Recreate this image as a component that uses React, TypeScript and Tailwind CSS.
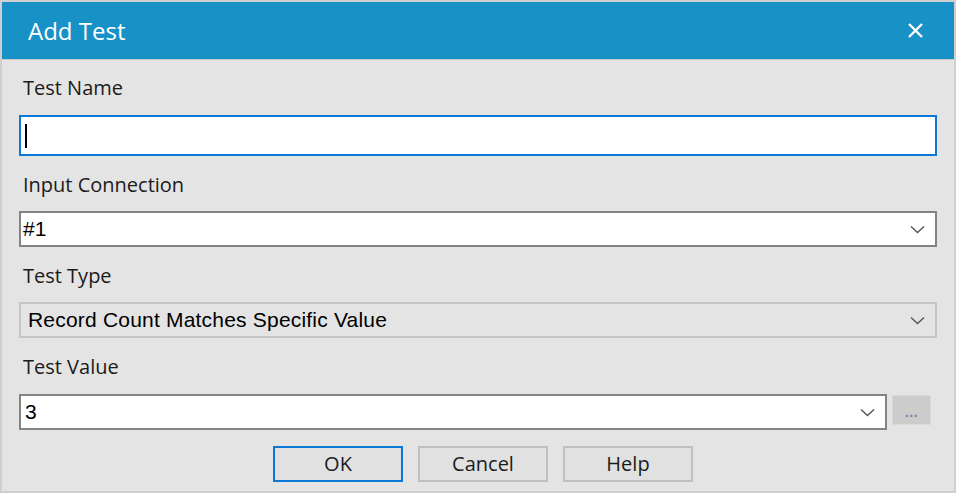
import React from "react"

const uiFont = { fontFamily: '"Open Sans", "Noto Sans", sans-serif' }
const fieldFont = { fontFamily: '"Liberation Sans", Arial, sans-serif' }

function Chevron() {
  return (
    <svg width="15" height="9" viewBox="0 0 15 9" className="shrink-0">
      <path d="M1 1.5 L7.5 7.5 L14 1.5" fill="none" stroke="#555" strokeWidth="1.4" />
    </svg>
  )
}

function Label({ children }: { children: React.ReactNode }) {
  return (
    <div className="ml-[21px] h-6 leading-6 text-[20px] text-[#1b1b1b]" style={uiFont}>
      {children}
    </div>
  )
}

export default function App() {
  return (
    <div className="w-[960px] h-[496px] bg-white">
      <div className="w-[956px] h-[493px] border-2 border-[#cfcfcf] bg-[#e4e4e4] flex flex-col">
        {/* title bar */}
        <div className="h-[58px] bg-[#1791c6] border-b border-[#c9c9c9] flex items-center justify-between pl-[26px] pr-[30px] shrink-0">
          <span className="text-white text-[24px]" style={uiFont}>Add Test</span>
          <svg width="17" height="17" viewBox="0 0 17 17">
            <path d="M2 2 L15 15 M15 2 L2 15" stroke="white" strokeWidth="2.4" />
          </svg>
        </div>

        <div className="flex flex-col">
          <div className="mt-[16px]">
            <Label>Test Name</Label>
          </div>
          <div className="mt-[15px] mx-[17px] h-[41px] border-2 border-[#0a78d4] bg-white flex items-center px-[4px]">
            <div className="w-[2px] h-[24px] bg-black" />
          </div>

          <div className="mt-[17px]">
            <Label>Input Connection</Label>
          </div>
          <div className="mt-[14px] mx-[17px] h-[36px] border-2 border-[#848484] bg-white flex items-center justify-between pl-[2px] pr-[10px]">
            <span className="text-[21px] text-black" style={fieldFont}>#1</span>
            <Chevron />
          </div>

          <div className="mt-[17px]">
            <Label>Test Type</Label>
          </div>
          <div className="mt-[14px] mx-[17px] h-[36px] border-2 border-[#c4c4c4] bg-[#e4e4e4] flex items-center justify-between pl-[7px] pr-[10px]">
            <span className="text-[21px] tracking-[0.2px] text-black" style={fieldFont}>Record Count Matches Specific Value</span>
            <Chevron />
          </div>

          <div className="mt-[17px]">
            <Label>Test Value</Label>
          </div>
          <div className="mt-[15px] ml-[17px] mr-[23px] flex items-start gap-[5px]">
            <div className="flex-1 h-[36px] border-2 border-[#848484] bg-white flex items-center justify-between pl-[4px] pr-[10px]">
              <span className="text-[21px] text-black" style={fieldFont}>3</span>
              <Chevron />
            </div>
            <div className="mt-[1px] w-[39px] h-[30px] bg-[#cccccc] border border-[#dadada] flex items-end justify-center pb-[5px]">
              <span className="text-[14px] font-bold leading-none text-[#6f88b4] tracking-[0.5px]" style={fieldFont}>...</span>
            </div>
          </div>

          <div className="mt-[16px] flex justify-center gap-[15px] pl-[10px]">
            <button className="w-[130px] h-[36px] border-2 border-[#0a78d4] bg-[#e1e1e1] text-[20px] text-[#1b1b1b]" style={uiFont}>OK</button>
            <button className="w-[130px] h-[36px] border-2 border-[#c0c0c0] bg-[#e1e1e1] text-[20px] text-[#1b1b1b]" style={uiFont}>Cancel</button>
            <button className="w-[130px] h-[36px] border-2 border-[#c0c0c0] bg-[#e1e1e1] text-[20px] text-[#1b1b1b]" style={uiFont}>Help</button>
          </div>
        </div>
      </div>
    </div>
  )
}
